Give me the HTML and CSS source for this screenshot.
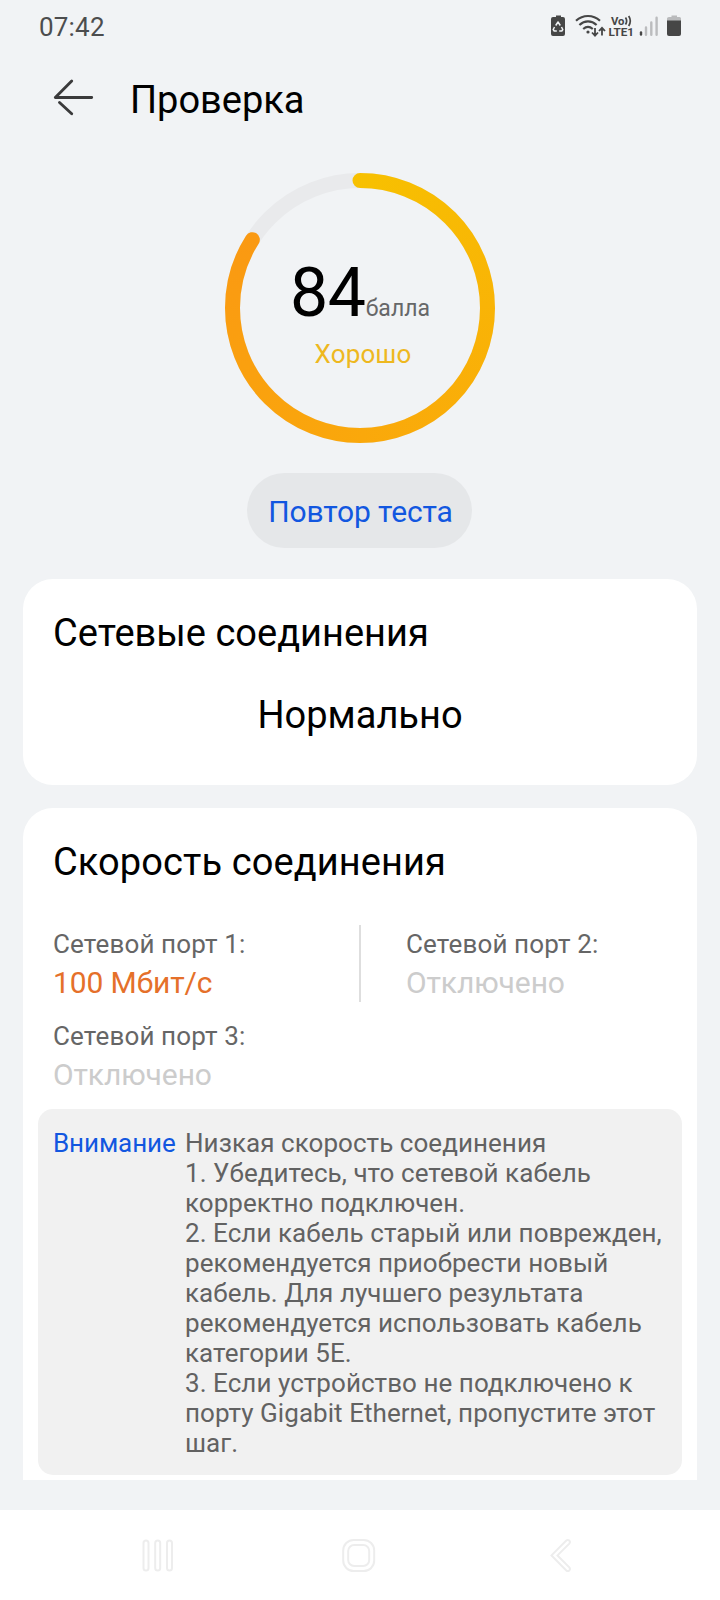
FILE: index.html
```html
<!DOCTYPE html>
<html lang="ru">
<head>
<meta charset="utf-8">
<title>Проверка</title>
<link rel="stylesheet" href="styles.css">
</head>
<body>
<div class="screen">
  <div class="status">
    <span class="clock">07:42</span>
    <svg class="status-icons" width="136" height="28" viewBox="548 12 136 28">
      <path fill="#464646" d="M553 17h3v-1.500h5v1.500h2q2 0 2 2v15q0 2-2 2h-10q-2 0-2-2v-15q0-2 2-2z"/>
      <path fill="none" stroke="#f1f3f5" stroke-width="1.500" stroke-linejoin="round" d="M555.700 25.500l2.300-3.500 2.300 3.500M561.500 27l1.300 2.500-1 1.500h-2.600M556.800 31h-2.600l-1-1.500 1.300-2.500"/>
      <g fill="none" stroke="#464646" stroke-width="2.200">
        <path d="M576 20.800c7-6.400 17-6.400 24 0"/>
        <path d="M579.400 25c5.200-4.700 12-4.700 17.200 0"/>
        <path d="M583.200 29c3-2.600 6.600-2.600 9.600 0"/>
      </g>
      <circle cx="588" cy="32" r="1.600" fill="#464646"/>
      <path fill="none" stroke="#464646" stroke-width="1.800" d="M595 28v7.500M592 32.500l3 3.200 3-3.200M602 35.500v-7.500M599 31l3-3.200 3 3.200"/>
      <g class="volte">
        <text x="611" y="24.500" font-size="11" textLength="13.500" lengthAdjust="spacingAndGlyphs">Vo</text>
        <text x="608.500" y="36" font-size="11.500" textLength="25.500" lengthAdjust="spacingAndGlyphs">LTE1</text>
      </g>
      <path fill="none" stroke="#464646" stroke-width="1.700" d="M625.500 17.500q2.300 3.500 0 7M628.700 16q3.200 5 0 10"/>
      <path stroke="#464646" stroke-width="2.400" stroke-linecap="round" d="M641 32.500v2"/>
      <path stroke="#bbbcbe" stroke-width="2.400" stroke-linecap="round" d="M646 27.500v7.200M651.300 22.500v12.200M656.600 17.700v17"/>
      <path fill="#b9babc" d="M669 17h2.500v-1.500h5.500v1.500h2.500q1.500 0 1.500 1.500v3h-14v-3q0-1.500 2-1.500z"/>
      <path fill="#464646" d="M667 20.500h14v13.500q0 2-2 2h-10q-2 0-2-2z"/>
    </svg>
  </div>

  <header class="header">
    <svg width="42" height="38" viewBox="52 78 42 38" fill="none" stroke="#3a3a3b" stroke-width="2.900" stroke-linecap="round" stroke-linejoin="round">
      <path d="M91.700 97.500H55.300L71.700 81M59.500 102.500L71.700 113.800"/>
    </svg>
    <h1 class="title">Проверка</h1>
  </header>

  <section class="score">
    <svg class="ring" width="270" height="270" viewBox="0 0 270 270">
      <mask id="arc" maskUnits="userSpaceOnUse" x="0" y="0" width="270" height="270">
        <circle cx="135" cy="135" r="127.500" fill="none" stroke="#fff" stroke-width="15" stroke-linecap="round" pathLength="100" stroke-dasharray="84 100" transform="rotate(-90 135 135)"/>
      </mask>
      <circle cx="135" cy="135" r="127.500" fill="none" stroke="#e9eaec" stroke-width="15"/>
      <g mask="url(#arc)">
        <foreignObject width="270" height="270"><div class="sweep"></div></foreignObject>
      </g>
    </svg>
    <div class="score-text">
      <div class="points"><span class="value">84</span><span class="unit">балла</span></div>
      <div class="grade">Хорошо</div>
    </div>
  </section>

  <button class="retest">Повтор теста</button>

  <section class="card network">
    <h2 class="card-title">Сетевые соединения</h2>
    <p class="state">Нормально</p>
  </section>

  <section class="card speed">
    <h2 class="card-title">Скорость соединения</h2>
    <div class="ports">
      <div class="port"><span class="label">Сетевой порт 1:</span><span class="rate slow">100 Мбит/с</span></div>
      <div class="port divided"><span class="label">Сетевой порт 2:</span><span class="rate">Отключено</span></div>
      <div class="port"><span class="label">Сетевой порт 3:</span><span class="rate">Отключено</span></div>
    </div>
    <div class="notice">
      <span class="warn">Внимание</span>
      <p class="advice">Низкая скорость соединения<br>1. Убедитесь, что сетевой кабель<br>корректно подключен.<br>2. Если кабель старый или поврежден,<br>рекомендуется приобрести новый<br>кабель. Для лучшего результата<br>рекомендуется использовать кабель<br>категории 5E.<br>3. Если устройство не подключено к<br>порту Gigabit Ethernet, пропустите этот<br>шаг.</p>
    </div>
  </section>

  <nav class="navbar">
    <svg width="32" height="36" viewBox="0 0 32 36"><rect x="1.500" y="2.500" width="5" height="30" rx="2.500"/><rect x="13.200" y="2.500" width="5" height="30" rx="2.500"/><rect x="25" y="2.500" width="5" height="30" rx="2.500"/></svg>
    <svg width="34" height="36" viewBox="0 0 34 36"><rect x="1.200" y="2" width="31" height="31" rx="10.500"/><rect x="6.200" y="7" width="21" height="21" rx="6"/></svg>
    <svg width="24" height="36" viewBox="0 0 24 36"><path d="M1.500 17.400L16.300 2.600q1.500-1.300 3 0 1.300 1.500 0 3L7.500 17.400l11.800 12q1.300 1.500 0 3-1.500 1.300-3 0z"/></svg>
  </nav>
</div>
</body>
</html>
```

FILE: styles.css
```css
* { box-sizing: border-box; }
body { margin: 0; background: #f1f3f5; font-family: Roboto, "Noto Sans", sans-serif; color: #000; }
h1, h2, p { margin: 0; font-weight: 400; }
svg { display: block; flex: none; }
.screen { width: 720px; height: 1600px; display: flex; flex-direction: column; overflow: hidden; white-space: nowrap; }

.status { height: 56px; padding: 12px 36px 0 39px; display: flex; justify-content: space-between; align-items: flex-start; }
.clock { font-size: 26px; line-height: 30px; letter-spacing: 0.2px; color: #4c4d4e; }
.volte { fill: #464646; font-weight: 700; }

.header { height: 117px; padding: 22px 0 0 52px; display: flex; gap: 36px; align-items: flex-start; }
.title { font-size: 38px; line-height: 44px; }

.score { width: 270px; height: 270px; align-self: center; display: grid; }
.ring, .score-text { grid-area: 1 / 1; }
.sweep { width: 270px; height: 270px; background: conic-gradient(from -12deg, #f7c200, #f9b406 28%, #faa80b 53%, #fa9c11 80%, #fa9812 90%, #f7c200 91%); }
.score-text { padding-top: 80px; text-align: center; }
.points { line-height: 80px; height: 80px; }
.value { font-size: 68px; letter-spacing: -0.4px; }
.unit { font-size: 23px; color: #666768; }
.grade { font-size: 26px; line-height: 30px; letter-spacing: 0.15px; margin-top: 6px; padding-left: 6px; color: #eeb81f; }

.retest { width: 225px; height: 75px; margin: 30px 0 31px 247px; padding: 2px 0 0 2px; border: 0; border-radius: 38px; background: #e5e7e9; color: #1257e0; font: 30px/36px Roboto, "Noto Sans", sans-serif; letter-spacing: -0.12px; }

.card { margin: 0 23px; background: #fff; }
.network { height: 206px; border-radius: 30px; padding: 32px 30px 0; }
.card-title { font-size: 38px; line-height: 44px; }
.state { margin-top: 38px; text-align: center; font-size: 38px; line-height: 44px; }

.speed { margin-top: 23px; height: 672px; border-radius: 30px 30px 0 0; padding: 32px 15px 0; }
.speed .card-title { padding-left: 15px; letter-spacing: 0.1px; }
.ports { margin-top: 41px; display: grid; grid-template-columns: 321px 1fr; row-gap: 15px; }
.port { height: 77px; padding: 4px 0 0 15px; display: flex; flex-direction: column; gap: 6px; }
.divided { border-left: 2px solid #dedede; padding-left: 45px; }
.label { font-size: 26px; line-height: 30px; letter-spacing: 0.14px; color: #666; }
.rate { font-size: 30px; line-height: 36px; letter-spacing: -0.1px; color: #ccc; }
.slow { color: #e5702a; }
.notice { margin-top: 15px; height: 366px; border-radius: 15px; background: #f1f1f1; padding: 19px 0 0 15px; display: flex; gap: 8px; font-size: 26px; line-height: 30px; }
.warn { width: 124px; letter-spacing: -0.1px; color: #1257e0; }
.advice { letter-spacing: 0.05px; color: #626262; }

.navbar { margin-top: 30px; height: 90px; background: #fff; padding: 28px 0 0 141.500px; display: flex; }
.navbar svg { fill: none; stroke: #ededed; stroke-width: 2; }
.navbar svg + svg { margin-left: 168px; }
.navbar svg + svg + svg { margin-left: 174px; }
```
